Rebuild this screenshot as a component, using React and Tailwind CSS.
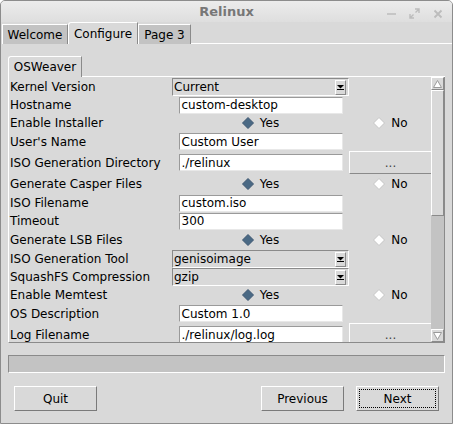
import React from 'react';

const FONT = { fontFamily: '"DejaVu Sans", "Liberation Sans", sans-serif' };

const ComboArrow = () => (
  <span className="flex h-[15px] w-[11px] items-center justify-center border border-t-white border-l-white border-r-[#8a8a8a] border-b-[#8a8a8a] bg-[#d9d9d9]">
    <svg width="7" height="6" viewBox="0 0 7 6">
      <path d="M0 1h7L3.5 4.5z" fill="#000" />
      <path d="M0 5.5h7" stroke="#000" strokeWidth="1" />
    </svg>
  </span>
);

const Combo = ({ value }) => (
  <div className="col-span-1 flex h-[18px] w-[177px] items-center justify-between border border-t-[#8a8a8a] border-l-[#8a8a8a] border-r-white border-b-white bg-[#d9d9d9] pl-[1px] pr-[2px]">
    <span>{value}</span>
    <ComboArrow />
  </div>
);

const Entry = ({ value }) => (
  <div className="mx-auto flex h-[17px] w-[164px] items-center border border-t-[#9a9a9a] border-l-[#9a9a9a] border-r-[#e8e8e8] border-b-[#e8e8e8] bg-white pl-[2px]">
    {value}
  </div>
);

const Diamond = ({ on }) => (
  <svg width="12" height="12" viewBox="0 0 12 12">
    <path
      d="M6 0.5L11.5 6L6 11.5L0.5 6z"
      fill={on ? '#4a6984' : '#ffffff'}
      stroke={on ? '#3c5770' : '#c4c4c4'}
      strokeWidth="1"
    />
  </svg>
);

const Radio = ({ label, on }) => (
  <div className="flex items-center justify-center gap-[6px]">
    <Diamond on={on} />
    <span>{label}</span>
  </div>
);

const Dots = ({ h }) => (
  <div className={`flex w-[83px] items-center justify-center border border-t-white border-l-white border-r-[#8a8a8a] border-b-[#8a8a8a] ${h}`}>
    <span className="text-[#444]">...</span>
  </div>
);

const rows = [
  { label: 'Kernel Version', h: 'h-[18px]', kind: 'combo', value: 'Current' },
  { label: 'Hostname', h: 'h-[18px]', kind: 'entry', value: 'custom-desktop' },
  { label: 'Enable Installer', h: 'h-[18px]', kind: 'radio' },
  { label: "User's Name", h: 'h-[19px]', kind: 'entry', value: 'Custom User' },
  { label: 'ISO Generation Directory', h: 'h-[23px]', kind: 'entry', value: './relinux', button: true },
  { label: 'Generate Casper Files', h: 'h-[20px]', kind: 'radio' },
  { label: 'ISO Filename', h: 'h-[18px]', kind: 'entry', value: 'custom.iso' },
  { label: 'Timeout', h: 'h-[18px]', kind: 'entry', value: '300' },
  { label: 'Generate LSB Files', h: 'h-[20px]', kind: 'radio' },
  { label: 'ISO Generation Tool', h: 'h-[18px]', kind: 'combo', value: 'genisoimage' },
  { label: 'SquashFS Compression', h: 'h-[18px]', kind: 'combo', value: 'gzip' },
  { label: 'Enable Memtest', h: 'h-[18px]', kind: 'radio' },
  { label: 'OS Description', h: 'h-[19px]', kind: 'entry', value: 'Custom 1.0' },
  { label: 'Log Filename', h: 'h-[23px]', kind: 'entry', value: './relinux/log.log', button: true },
];

const Row = ({ row }) => (
  <div className={`grid shrink-0 grid-cols-[163px_177px_83px] items-center ${row.h}`}>
    <span className="pl-[1px]">{row.label}</span>
    {row.kind === 'combo' && <Combo value={row.value} />}
    {row.kind === 'entry' && <Entry value={row.value} />}
    {row.kind === 'radio' && <Radio label="Yes" on />}
    {row.kind === 'radio' && <Radio label="No" />}
    {row.button && <Dots h="h-[23px]" />}
  </div>
);

const Scrollbar = () => (
  <div className="flex w-[13px] flex-col bg-[#c3c3c3]">
    <div className="flex h-[13px] items-center justify-center border border-t-white border-l-white border-r-[#8a8a8a] border-b-[#8a8a8a] bg-[#d9d9d9]">
      <svg width="9" height="8" viewBox="0 0 9 8">
        <path d="M4.5 0.5L8.5 7.5H0.5z" fill="#fff" stroke="#9a9a9a" strokeWidth="1" />
      </svg>
    </div>
    <div className="h-[126px] border border-t-white border-l-white border-r-[#8a8a8a] border-b-[#8a8a8a] bg-[#d9d9d9]" />
    <div className="flex-1" />
    <div className="flex h-[13px] items-center justify-center border border-t-white border-l-white border-r-[#8a8a8a] border-b-[#8a8a8a] bg-[#d9d9d9]">
      <svg width="9" height="8" viewBox="0 0 9 8">
        <path d="M4.5 7.5L8.5 0.5H0.5z" fill="#fff" stroke="#9a9a9a" strokeWidth="1" />
      </svg>
    </div>
  </div>
);

const Btn = ({ children, focus }) => (
  <div className="flex h-[25px] w-[83px] items-center justify-center border border-t-white border-l-white border-r-[#7a7a7a] border-b-[#7a7a7a] p-[2px]">
    <div className={`flex h-full w-full items-center justify-center ${focus ? 'border border-dotted border-black' : ''}`}>
      {children}
    </div>
  </div>
);

export default function App() {
  return (
    <div
      style={FONT}
      className="flex h-[424px] w-[453px] flex-col overflow-hidden rounded-t-[5px] border border-[#8c8c8c] bg-[#d9d9d9] text-[12px] leading-none text-black"
    >
      {/* title bar */}
      <div className="relative flex h-[21px] shrink-0 items-center justify-center bg-gradient-to-b from-[#ececec] to-[#dedede]">
        <span className="text-[13px] font-bold text-[#777]">Relinux</span>
        <div className="absolute right-[9px] top-[7px] flex items-center gap-[13px]">
          <svg width="9" height="9" viewBox="0 0 9 9">
            <path d="M0 5h9" stroke="#bcbcbc" strokeWidth="1.6" />
          </svg>
          <svg width="11" height="11" viewBox="0 0 11 11">
            <path d="M6 1h4v4M10 1L6.5 4.5M5 10H1V6M1 10l3.5-3.5" stroke="#bcbcbc" strokeWidth="1.4" fill="none" />
          </svg>
          <svg width="10" height="10" viewBox="0 0 10 10">
            <path d="M1.5 1.5l7 7M8.5 1.5l-7 7" stroke="#bcbcbc" strokeWidth="1.8" />
          </svg>
        </div>
      </div>

      {/* outer tabs */}
      <div className="flex h-[22px] shrink-0 items-end pl-[1px]">
        <div className="flex h-[20px] w-[66px] items-center justify-center border border-b-0 border-t-white border-l-white border-r-[#8a8a8a] bg-[#c3c3c3]">
          Welcome
        </div>
        <div className="flex h-[22px] w-[70px] items-center justify-center rounded-tl-[3px] border border-b-0 border-t-white border-l-white border-r-[#8a8a8a] bg-[#d9d9d9]">
          Configure
        </div>
        <div className="flex h-[20px] w-[53px] items-center justify-center border border-b-0 border-t-white border-l-white border-r-[#8a8a8a] bg-[#c3c3c3]">
          Page 3
        </div>
        <div className="flex-1 border-b border-white" />
      </div>

      <div className="flex flex-1 flex-col">
        {/* inner notebook */}
        <div className="mt-[12px] flex h-[21px] shrink-0 items-end px-[7px]">
          <div className="flex h-[21px] w-[74px] items-center justify-center rounded-tl-[3px] border border-b-0 border-t-white border-l-white border-r-[#8a8a8a]">
            OSWeaver
          </div>
          <div className="flex-1 border-b border-white" />
        </div>
        <div className="mx-[7px] flex h-[266px] shrink-0 border border-t-0 border-l-white border-r-[#8a8a8a] border-b-[#8a8a8a]">
          <div className="flex flex-1 flex-col overflow-hidden pt-[1px]">
            {rows.map((row) => (
              <Row key={row.label} row={row} />
            ))}
          </div>
          <Scrollbar />
        </div>

        {/* progress bar */}
        <div className="mx-[7px] mt-[12px] h-[18px] shrink-0 border border-t-[#8a8a8a] border-l-[#8a8a8a] border-r-white border-b-white bg-[#c3c3c3]" />

        {/* buttons */}
        <div className="mt-[13px] flex items-center px-[13px]">
          <Btn>Quit</Btn>
          <div className="flex-1" />
          <Btn>Previous</Btn>
          <div className="w-[12px]" />
          <Btn focus>Next</Btn>
        </div>
      </div>
    </div>
  );
}
